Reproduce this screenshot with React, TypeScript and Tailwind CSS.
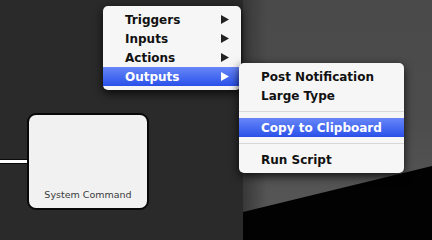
import React from "react";

const Arrow = ({ white }: { white?: boolean }) => (
  <svg width="8" height="9" viewBox="0 0 8 9" className="block">
    <path d="M0 0 L8 4.5 L0 9 Z" fill={white ? "#ffffff" : "#222222"} />
  </svg>
);

const MenuRow = ({ label, active, arrow }: { label: string; active?: boolean; arrow?: boolean }) => (
  <div
    className={
      "flex h-[19px] items-center justify-between pl-[22px] pr-[12px] " +
      (active ? "bg-gradient-to-b from-[#6886f8] to-[#2a4fe9] text-white" : "text-[#111]")
    }
  >
    <span>{label}</span>
    {arrow ? <Arrow white={active} /> : null}
  </div>
);

const Sep = () => (
  <div className="flex h-[13px] items-center">
    <div className="h-px w-full bg-[#d8d8d8]" />
  </div>
);

export default function App() {
  return (
    <div
      className="relative flex h-[240px] w-[432px] overflow-hidden bg-[#2a2a2a]"
      style={{ fontFamily: '"DejaVu Sans", "Liberation Sans", sans-serif' }}
    >
      {/* canvas with node */}
      <div className="flex w-[243px] flex-col pt-[113px]">
        <div className="flex items-center">
          <div className="h-[5px] w-[27px] border-y border-[#0a0a0a] bg-white" />
          <div className="flex h-[97px] w-[122px] items-end justify-center rounded-[9px] border-2 border-[#080808] bg-[#f1f1f1] pb-[6px]">
            <span className="text-[9.5px] text-[#3a3a3a]">System Command</span>
          </div>
        </div>
      </div>

      {/* right gray window area */}
      <div className="relative flex-1 bg-gradient-to-b from-[#4a4a4a] via-[#4c4c4c] to-[#5a5a5a]">
        <div className="h-full w-[24px] bg-gradient-to-r from-[#383838] to-transparent" />
        <svg className="absolute inset-0" width="189" height="240">
          <polygon points="0,212 189,166 189,240 0,240" fill="#020202" />
        </svg>
      </div>

      {/* main menu */}
      <div className="absolute left-[103px] top-[6px] w-[138px] rounded-[5px] bg-[#f6f6f6] py-[4px] text-[12px] font-bold shadow-[0_3px_10px_rgba(0,0,0,0.8)]">
        <MenuRow label="Triggers" arrow />
        <MenuRow label="Inputs" arrow />
        <MenuRow label="Actions" arrow />
        <MenuRow label="Outputs" arrow active />
      </div>

      {/* submenu */}
      <div className="absolute left-[239px] top-[63px] w-[165px] rounded-[5px] bg-[#f6f6f6] py-[4px] text-[12px] font-bold shadow-[0_3px_10px_rgba(0,0,0,0.8)]">
        <MenuRow label="Post Notification" />
        <MenuRow label="Large Type" />
        <Sep />
        <MenuRow label="Copy to Clipboard" active />
        <Sep />
        <MenuRow label="Run Script" />
      </div>
    </div>
  );
}
